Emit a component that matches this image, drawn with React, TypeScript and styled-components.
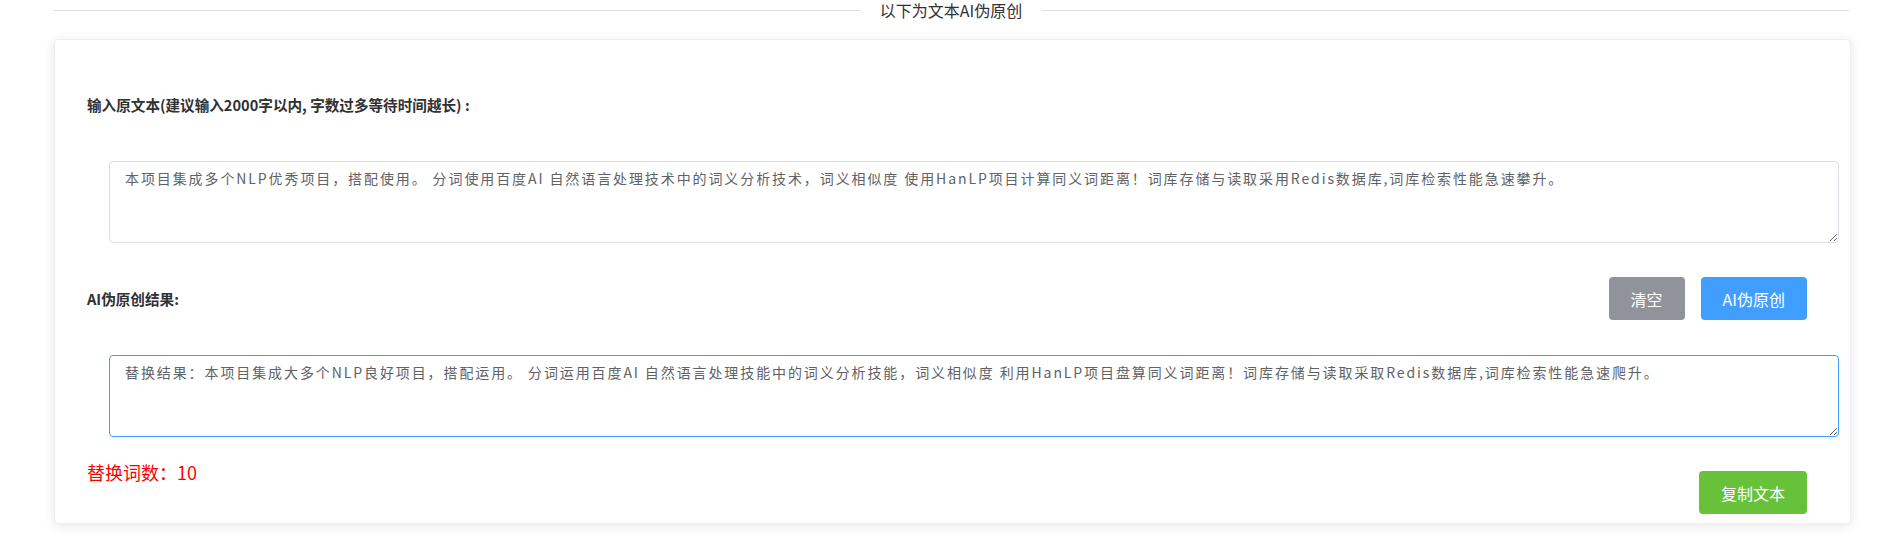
import React from 'react';
import styled, { createGlobalStyle } from 'styled-components';

const GlobalStyle = createGlobalStyle`
  html, body {
    margin: 0;
    padding: 0;
    background: #fff;
  }
  body {
    font-family: "Noto Sans CJK SC", "Noto Sans", sans-serif;
    color: #303133;
  }
`;

const Page = styled.div`
  display: flex;
  flex-direction: column;
  padding-bottom: 18px;
`;

const Divider = styled.div`
  display: flex;
  align-items: center;
  height: 20px;
  padding: 0 52px 0 53px;
`;

const DividerLine = styled.div`
  flex: 1;
  height: 1px;
  background: #dcdfe6;
`;

const DividerText = styled.span`
  padding: 0 20px;
  font-size: 16px;
  line-height: 20px;
  color: #303133;
  white-space: nowrap;
`;

const Card = styled.div`
  margin: 19px 50px 0 54px;
  padding: 55px 11px 9px 32px;
  border: 1px solid #ebeef5;
  border-radius: 4px;
  background: #fff;
  box-shadow: 0 2px 12px 0 rgba(0, 0, 0, 0.1);
  display: flex;
  flex-direction: column;
`;

const Label = styled.div`
  font-size: 14.6px;
  font-weight: 700;
  line-height: 20px;
  color: #303133;
`;

const TextBox = styled.textarea<{ $active?: boolean; $top?: number }>`
  display: block;
  box-sizing: border-box;
  width: calc(100% - 22px);
  height: 82px;
  margin: ${({ $top }) => `${$top ?? 0}px`} 0 0 22px;
  padding: 6px 15px;
  border: 1px solid ${({ $active }) => ($active ? '#409eff' : '#dcdfe6')};
  border-radius: 4px;
  font-family: "Noto Sans CJK SC", "Noto Sans", sans-serif;
  font-size: 14px;
  letter-spacing: 1.9px;
  line-height: 21px;
  color: #606266;
  background: #fff;
  resize: vertical;
  outline: none;
`;

const ActionRow = styled.div`
  display: flex;
  align-items: center;
  justify-content: space-between;
  margin-top: 34px;
  padding-right: 32px;
`;

const ButtonGroup = styled.div`
  display: flex;
  gap: 16px;
`;

const Button = styled.button<{ $kind: 'info' | 'primary' | 'success' }>`
  height: 43px;
  padding: 0 22px;
  border: none;
  border-radius: 4px;
  font-family: "Noto Sans CJK SC", "Noto Sans", sans-serif;
  font-size: 16px;
  color: #fff;
  cursor: pointer;
  background: ${({ $kind }) =>
    $kind === 'info' ? '#909399' : $kind === 'primary' ? '#409eff' : '#67c23a'};
`;

const FooterRow = styled.div`
  display: flex;
  align-items: flex-start;
  justify-content: space-between;
  margin-top: 22px;
  padding-right: 32px;
`;

const CountText = styled.div`
  font-size: 18px;
  line-height: 27px;
  color: #ff0000;
`;

const CopyButton = styled(Button)`
  margin-top: 12px;
`;

const source =
  '本项目集成多个NLP优秀项目，搭配使用。 分词使用百度AI 自然语言处理技术中的词义分析技术，词义相似度 使用HanLP项目计算同义词距离！词库存储与读取采用Redis数据库,词库检索性能急速攀升。';

const result =
  '替换结果：本项目集成大多个NLP良好项目，搭配运用。 分词运用百度AI 自然语言处理技能中的词义分析技能，词义相似度 利用HanLP项目盘算同义词距离！词库存储与读取采取Redis数据库,词库检索性能急速爬升。';

const App = (): JSX.Element => (
  <>
    <GlobalStyle />
    <Page>
      <Divider>
        <DividerLine />
        <DividerText>以下为文本AI伪原创</DividerText>
        <DividerLine />
      </Divider>

      <Card>
        <Label>输入原文本(建议输入2000字以内, 字数过多等待时间越长) :</Label>
        <TextBox $top={46} defaultValue={source} />

        <ActionRow>
          <Label>AI伪原创结果:</Label>
          <ButtonGroup>
            <Button $kind="info">清空</Button>
            <Button $kind="primary">AI伪原创</Button>
          </ButtonGroup>
        </ActionRow>

        <TextBox $top={35} $active defaultValue={result} />

        <FooterRow>
          <CountText>替换词数：10</CountText>
          <CopyButton $kind="success">复制文本</CopyButton>
        </FooterRow>
      </Card>
    </Page>
  </>
);

export default App;
